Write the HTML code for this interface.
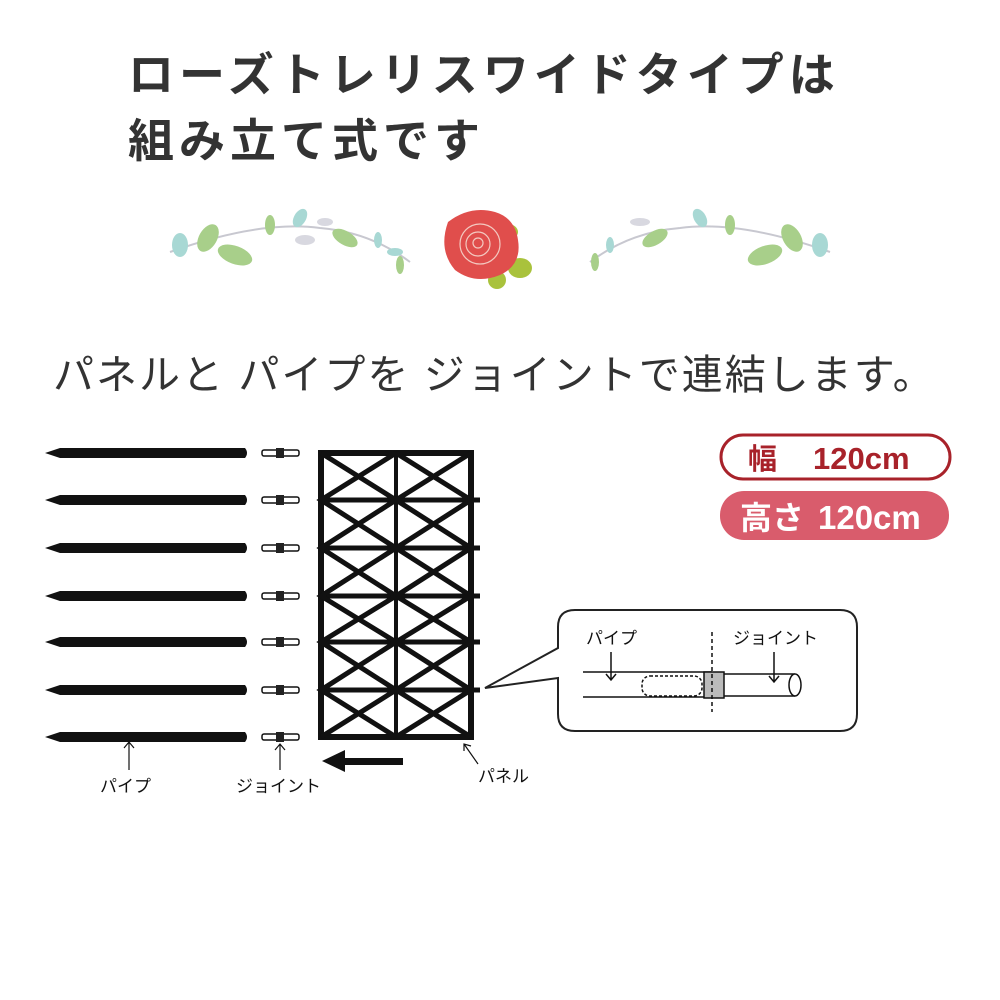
<!DOCTYPE html>
<html><head><meta charset="utf-8"><style>
html,body{margin:0;padding:0;background:#fff;}
body{width:1000px;height:1000px;overflow:hidden;position:relative;font-family:"Liberation Sans","Noto Sans CJK JP",sans-serif;}
.t{position:absolute;color:#333;white-space:nowrap;}
</style></head><body>
<div class="t" style="left:128px;top:42px;font-size:46px;font-weight:bold;letter-spacing:5px;line-height:66px;">ローズトレリスワイドタイプは<br>組み立て式です</div>
<div class="t" style="left:53px;top:341px;font-size:41px;letter-spacing:2px;">パネルと パイプを ジョイントで連結します。</div>
<svg width="1000" height="1000" style="position:absolute;left:0;top:0">
<g fill="none" stroke="#c8c8d0" stroke-width="2">
<path d="M170 252 Q260 220 320 228 Q370 232 410 262"/>
<path d="M830 252 Q740 220 680 228 Q630 232 590 262"/>
</g>
<g>
<ellipse cx="180" cy="245" rx="8" ry="12" fill="#a8d8d4"/>
<ellipse cx="208" cy="238" rx="9" ry="15" fill="#a8cf8a" transform="rotate(30 208 238)"/>
<ellipse cx="235" cy="255" rx="18" ry="9" fill="#a8cf8a" transform="rotate(20 235 255)"/>
<ellipse cx="270" cy="225" rx="5" ry="10" fill="#a8cf8a"/>
<ellipse cx="300" cy="218" rx="6" ry="10" fill="#a8d8d4" transform="rotate(30 300 218)"/>
<ellipse cx="305" cy="240" rx="10" ry="5" fill="#d8d8e0"/>
<ellipse cx="345" cy="238" rx="14" ry="7" fill="#a8cf8a" transform="rotate(30 345 238)"/>
<ellipse cx="325" cy="222" rx="8" ry="4" fill="#d8d8e0"/>
<ellipse cx="378" cy="240" rx="4" ry="8" fill="#a8d8d4"/>
<ellipse cx="395" cy="252" rx="8" ry="4" fill="#a8d8d4"/>
<ellipse cx="400" cy="265" rx="4" ry="9" fill="#a8cf8a"/>
<ellipse cx="820" cy="245" rx="8" ry="12" fill="#a8d8d4"/>
<ellipse cx="792" cy="238" rx="9" ry="15" fill="#a8cf8a" transform="rotate(-30 792 238)"/>
<ellipse cx="765" cy="255" rx="18" ry="9" fill="#a8cf8a" transform="rotate(-20 765 255)"/>
<ellipse cx="730" cy="225" rx="5" ry="10" fill="#a8cf8a"/>
<ellipse cx="700" cy="218" rx="6" ry="10" fill="#a8d8d4" transform="rotate(-30 700 218)"/>
<ellipse cx="655" cy="238" rx="14" ry="7" fill="#a8cf8a" transform="rotate(-30 655 238)"/>
<ellipse cx="640" cy="222" rx="10" ry="4" fill="#d8d8e0"/>
<ellipse cx="610" cy="245" rx="4" ry="8" fill="#a8d8d4"/>
<ellipse cx="595" cy="262" rx="4" ry="9" fill="#a8cf8a"/>
</g>
<ellipse cx="508" cy="232" rx="10" ry="8" fill="#a9c23c"/>
<ellipse cx="520" cy="268" rx="12" ry="10" fill="#a9c23c"/>
<ellipse cx="497" cy="280" rx="9" ry="9" fill="#a9c23c"/>
<path d="M448 222 Q470 205 495 212 Q515 218 518 240 Q522 265 500 275 Q475 285 455 270 Q438 250 448 222Z" fill="#e04e4c"/>
<g fill="none" stroke="#f3c9c0" stroke-width="1.2">
<circle cx="480" cy="244" r="20"/><circle cx="478" cy="244" r="12"/><circle cx="478" cy="243" r="5"/>
</g>
<g>
<g id="p">
<path d="M45 453 L60 448 L245 448 Q249 453 245 458 L60 458Z" fill="#111"/>
<rect x="262" y="450" width="37" height="6" fill="#fff" stroke="#111" stroke-width="1.5" rx="2"/>
<rect x="276" y="448" width="8" height="10" fill="#222"/>
</g>
<use href="#p" y="47"/><use href="#p" y="95"/><use href="#p" y="143"/><use href="#p" y="189"/><use href="#p" y="237"/><use href="#p" y="284"/>
</g>
<g stroke="#111" stroke-width="6" fill="none">
<rect x="321" y="453" width="150" height="284"/>
<line x1="396" y1="453" x2="396" y2="737" stroke-width="4"/>
<line x1="321" y1="500" x2="480" y2="500" stroke-width="5"/>
<line x1="321" y1="548" x2="480" y2="548" stroke-width="5"/>
<line x1="321" y1="596" x2="480" y2="596" stroke-width="5"/>
<line x1="321" y1="642" x2="480" y2="642" stroke-width="5"/>
<line x1="321" y1="690" x2="480" y2="690" stroke-width="5"/>
<path stroke-width="5" d="M321 453 L396 500 L321 548 L396 596 L321 642 L396 690 L321 737 M396 453 L321 500 L396 548 L321 596 L396 642 L321 690 L396 737 M396 453 L471 500 L396 548 L471 596 L396 642 L471 690 L396 737 M471 453 L396 500 L471 548 L396 596 L471 642 L396 690 L471 737"/>
</g>
<rect x="340" y="758" width="63" height="7" fill="#111"/>
<path d="M322 761 L345 750 L345 772Z" fill="#111"/>
<g stroke="#111" stroke-width="1.2" fill="none">
<path d="M129 770 V742 M124 748 L129 742 L134 748"/>
<path d="M280 770 V744 M275 750 L280 744 L285 750"/>
<path d="M478 764 L464 744 M464 751 L464 744 L471 746"/>
</g>
<g font-size="17" fill="#111">
<text x="100" y="792">パイプ</text>
<text x="236" y="792">ジョイント</text>
<text x="478" y="782">パネル</text>
</g>
<path d="M575 610 H840 Q857 610 857 627 V714 Q857 731 840 731 H575 Q558 731 558 714 V678 L485 688 L558 648 V627 Q558 610 575 610Z" fill="#fff" stroke="#222" stroke-width="2"/>
<g font-size="17" fill="#111"><text x="586" y="644">パイプ</text><text x="733" y="644">ジョイント</text></g>
<g stroke="#111" stroke-width="1.5" fill="none">
<line x1="583" y1="672" x2="712" y2="672"/><line x1="583" y1="697" x2="712" y2="697"/>
<path d="M611 652 V680 M606 674 L611 680 L616 674"/>
<path d="M774 652 V682 M769 676 L774 682 L779 676"/>
<rect x="642" y="676" width="60" height="20" rx="8" stroke-dasharray="3 2"/>
<rect x="704" y="672" width="20" height="26" fill="#bbb"/>
<path d="M724 674 H795 M724 696 H795"/>
<ellipse cx="795" cy="685" rx="6" ry="11" fill="#fff"/>
<line x1="712" y1="632" x2="712" y2="712" stroke-dasharray="4 3"/>
</g>
<rect x="721" y="435" width="229" height="44" rx="22" fill="#fff" stroke="#a8222a" stroke-width="3"/>
<text x="748" y="469" font-size="29" font-weight="bold" fill="#a8222a">幅</text>
<text x="813" y="469" font-size="31" font-weight="bold" fill="#a8222a">120cm</text>
<rect x="720" y="491" width="229" height="49" rx="24" fill="#d95c6c"/>
<text x="740" y="529" font-size="32" font-weight="bold" fill="#fff">高さ</text>
<text x="818" y="529" font-size="33" font-weight="bold" fill="#fff">120cm</text>
</svg>
</body></html>
